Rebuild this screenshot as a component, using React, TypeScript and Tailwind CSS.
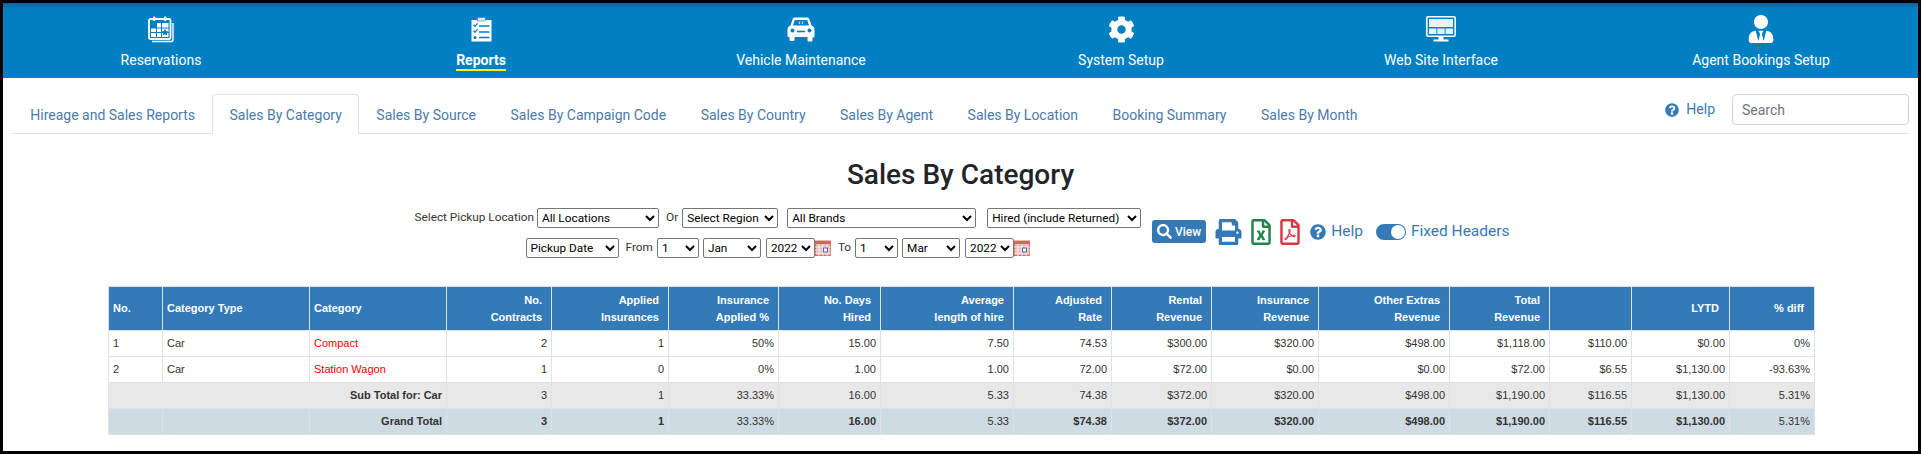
import { FaCog, FaPrint, FaQuestionCircle, FaRegFileExcel, FaRegFilePdf, FaSearch, FaUserTie } from 'react-icons/fa';

const NAV = ['Reservations', 'Reports', 'Vehicle Maintenance', 'System Setup', 'Web Site Interface', 'Agent Bookings Setup'];

const TABS = [
  'Hireage and Sales Reports',
  'Sales By Category',
  'Sales By Source',
  'Sales By Campaign Code',
  'Sales By Country',
  'Sales By Agent',
  'Sales By Location',
  'Booking Summary',
  'Sales By Month',
];

const COLS = [54, 147, 137, 105, 117, 110, 102, 133, 98, 100, 107, 131, 100, 82, 98, 85];

const HEAD: [string, string?][] = [
  ['No.'],
  ['Category Type'],
  ['Category'],
  ['No.', 'Contracts'],
  ['Applied', 'Insurances'],
  ['Insurance', 'Applied %'],
  ['No. Days', 'Hired'],
  ['Average', 'length of hire'],
  ['Adjusted', 'Rate'],
  ['Rental', 'Revenue'],
  ['Insurance', 'Revenue'],
  ['Other Extras', 'Revenue'],
  ['Total', 'Revenue'],
  [''],
  ['LYTD'],
  ['% diff'],
];

const ROWS = [
  ['1', 'Car', 'Compact', '2', '1', '50%', '15.00', '7.50', '74.53', '$300.00', '$320.00', '$498.00', '$1,118.00', '$110.00', '$0.00', '0%'],
  ['2', 'Car', 'Station Wagon', '1', '0', '0%', '1.00', '1.00', '72.00', '$72.00', '$0.00', '$0.00', '$72.00', '$6.55', '$1,130.00', '-93.63%'],
];

const SUB = ['3', '1', '33.33%', '16.00', '5.33', '74.38', '$372.00', '$320.00', '$498.00', '$1,190.00', '$116.55', '$1,130.00', '5.31%'];
const GRAND = ['3', '1', '33.33%', '16.00', '5.33', '$74.38', '$372.00', '$320.00', '$498.00', '$1,190.00', '$116.55', '$1,130.00', '5.31%'];
// grand total cells that are not bold in the picture
const GRAND_PLAIN = [2, 4, 12];

function CalendarIcon() {
  return (
    <svg viewBox="0 0 26 27" className="h-[27px] w-[26px]" fill="none">
      <path d="M4 25.500h19a2 2 0 0 0 2-2V7" stroke="#fff" strokeWidth="1.400" />
      <rect x="1" y="3" width="21.500" height="20" rx="1.500" fill="#0080c3" stroke="#fff" strokeWidth="1.800" />
      <rect x="5" y="0.500" width="2.400" height="4.500" rx="1" fill="#fff" />
      <rect x="16" y="0.500" width="2.400" height="4.500" rx="1" fill="#fff" />
      <path d="M8.500 7h12v5h-12zM3 12h17.500v9H3z" fill="#fff" />
      <path d="M3 16.500h18M8.500 7v14M13.500 7v14M3 12h18" stroke="#0080c3" strokeWidth="1" />
      <path d="m17 12.800 1.100 2.300 2.400.3-1.700 1.700.4 2.400-2.200-1.200-2.200 1.200.4-2.400-1.700-1.700 2.400-.3z" fill="#0080c3" />
    </svg>
  );
}

function ClipboardIcon() {
  return (
    <svg viewBox="0 0 21 25" className="h-[25px] w-[21px]">
      <path d="M0.500 3h20v21.500H.5z" fill="#fff" />
      <rect x="6.500" y="0.500" width="8" height="3.500" fill="#d6eaf5" stroke="#0080c3" strokeWidth="0.500" />
      <path d="m2.500 7.800 1.500 1.500 2.500-3M2.500 13.800l1.500 1.500 2.500-3" stroke="#0080c3" strokeWidth="1.300" fill="none" />
      <path d="M8 9h10.500M8 15h10.500M8 20.500h10.500" stroke="#0080c3" strokeWidth="1.500" />
      <circle cx="4" cy="20.500" r="1.500" fill="#0080c3" />
    </svg>
  );
}

function CarIcon() {
  return (
    <svg viewBox="0 0 28 25" className="h-[25px] w-[28px]">
      <path
        d="M5.500 2.500C6 1 7 .5 8.500.5h11c1.500 0 2.500.5 3 2l2 6c2 .8 3 2 3 4.500v6c0 1-.5 1.500-1.500 1.500H25.500v2.500c0 1-.5 1.500-1.500 1.500h-2c-1 0-1.500-.5-1.500-1.500V20h-13v2.500c0 1-.5 1.500-1.500 1.500H4c-1 0-1.500-.5-1.500-1.500V20H2c-1 0-1.500-.5-1.500-1.500v-5.500c0-2.500 1-3.700 3-4.500z"
        fill="#fff"
      />
      <path d="M7.800 3h12.400l1.800 5.500H6z" fill="#0080c3" />
      <path d="m13 4.500-1 2.500M16 4.500l-1 2.500" stroke="#fff" strokeWidth="0.900" />
      <circle cx="5.500" cy="13.500" r="2" fill="#0080c3" />
      <circle cx="22.500" cy="13.500" r="2" fill="#0080c3" />
      <path d="M10 14.500h8" stroke="#0080c3" strokeWidth="1.600" />
    </svg>
  );
}

function MonitorIcon() {
  return (
    <svg viewBox="0 0 30 26" className="h-[26px] w-[30px]">
      <rect x="0.800" y="0.800" width="28.400" height="19.400" rx="1.500" fill="none" stroke="#fff" strokeWidth="1.600" />
      <path d="M3 3h24v8H3z" fill="#e6f3fa" />
      <path d="M3 12.500h7.400V18H3zM11.300 12.500h7.400V18h-7.400zM19.600 12.500H27V18h-7.400z" fill="#e6f3fa" />
      <path d="M12.500 20.500h5v3h-5zM7.500 23.500h15V25.500h-15z" fill="#fff" />
    </svg>
  );
}

const NAV_ICONS = [
  <CalendarIcon key="cal" />,
  <ClipboardIcon key="clip" />,
  <CarIcon key="car" />,
  <FaCog key="cog" className="h-[27px] w-[27px] text-white" />,
  <MonitorIcon key="mon" />,
  <FaUserTie key="tie" className="h-[28px] w-[26px] text-white" />,
];

function DateCalendar() {
  return (
    <svg viewBox="0 0 16 16" className="h-[16px] w-[16px] shrink-0">
      <rect x="0.500" y="1" width="15" height="14.500" fill="#f3b3ad" stroke="#c9544c" strokeWidth="0.800" />
      <rect x="0.500" y="1" width="15" height="3" fill="#d8645c" />
      <path d="M0 7h16M0 10h16M0 13h16M4 4v12M8 4v12M12 4v12" stroke="#fff" strokeWidth="0.700" />
      <rect x="8.500" y="8" width="4" height="4" fill="#fff" stroke="#2f6fd0" strokeWidth="1" />
    </svg>
  );
}

function Select({ label, w }: { label: string; w: string }) {
  return (
    <select
      defaultValue={label}
      className={`h-[20px] ${w} rounded-[2px] border border-[#767676] bg-white text-[11.800px] leading-none text-black`}
    >
      <option>{label}</option>
    </select>
  );
}

export default function App() {
  return (
    <div className="h-[454px] w-[1921px] overflow-hidden border-[3px] border-black bg-white [font-family:Roboto,sans-serif]">
      <nav className="h-[75px] overflow-hidden bg-[#0080c3] bg-gradient-to-b from-[#00659a] from-0% to-[#0080c3] to-[8%]">
        <div className="-ml-0.5 grid w-[1920px] grid-cols-6">
          {NAV.map((label, i) => (
            <div key={label} className="flex flex-col items-center pt-[11px] text-white">
              <div className="flex h-[30px] items-center">{NAV_ICONS[i]}</div>
              <span
                className={`mt-[7px] text-[14px] leading-[18px] ${
                  i === 1 ? 'border-b-2 border-[#f5f500] font-bold' : ''
                }`}
              >
                {label}
              </span>
            </div>
          ))}
        </div>
      </nav>

      <div className="mx-[9px] mt-[16px] flex h-[40px] items-end border-b border-[#dee2e6] pl-[1px]">
        {TABS.map((t, i) => (
          <div
            key={t}
            className={`-mb-px h-[40px] rounded-t-[4px] border px-[16.250px] text-[14px] leading-[40px] text-[#4a7bab] ${
              i === 1 ? 'border-[#dee2e6] border-b-white bg-white' : 'border-transparent'
            }`}
          >
            {t}
          </div>
        ))}
        <div className="mb-[8px] ml-auto flex items-center gap-[7px]">
          <FaQuestionCircle className="h-[14px] w-[14px] text-[#337ab7]" />
          <span className="text-[14px] text-[#337ab7]">Help</span>
          <input
            placeholder="Search"
            className="ml-[10px] h-[31px] w-[177px] rounded-[4px] border border-[#ced4da] px-[9px] text-[14px] text-[#495057] placeholder:text-[#6c757d]"
          />
        </div>
      </div>

      <h1 className="mt-[19px] text-center text-[28px] leading-[44px] font-medium text-[#212529]">Sales By Category</h1>

      <div className="mt-[11px] flex items-center justify-center gap-[11px] pl-[3px] text-[11.800px] text-[#333]">
        <div className="flex flex-col items-center gap-[10px]">
          <div className="flex items-center">
            <span>Select Pickup Location</span>
            <div className="ml-[3px]">
              <Select label="All Locations" w="w-[122px]" />
            </div>
            <span className="mr-[4px] ml-[7px]">Or</span>
            <Select label="Select Region" w="w-[96px]" />
            <div className="ml-[9px]">
              <Select label="All Brands" w="w-[189px]" />
            </div>
            <div className="ml-[11px]">
              <Select label="Hired (include Returned)" w="w-[154px]" />
            </div>
          </div>
          <div className="flex items-center">
            <Select label="Pickup Date" w="w-[93px]" />
            <span className="mr-[4px] ml-[7px]">From</span>
            <Select label="1" w="w-[42px]" />
            <div className="ml-[4px]">
              <Select label="Jan" w="w-[58px]" />
            </div>
            <div className="ml-[5px]">
              <Select label="2022" w="w-[49px]" />
            </div>
            <DateCalendar />
            <span className="mr-[4px] ml-[7px]">To</span>
            <Select label="1" w="w-[43px]" />
            <div className="ml-[4px]">
              <Select label="Mar" w="w-[58px]" />
            </div>
            <div className="ml-[5px]">
              <Select label="2022" w="w-[49px]" />
            </div>
            <DateCalendar />
          </div>
        </div>

        <div className="mb-[3px] flex items-center text-[#337ab7]">
          <button className="flex h-[23px] w-[54px] items-center justify-center gap-[3px] rounded-[3px] bg-[#337ab7] text-[12px] font-medium text-white">
            <FaSearch className="h-[15px] w-[15px]" />
            View
          </button>
          <FaPrint className="ml-[9px] h-[26px] w-[27px]" />
          <FaRegFileExcel className="ml-[9px] h-[26px] w-[20px] text-[#1e8449]" />
          <FaRegFilePdf className="ml-[9px] h-[26px] w-[20px] text-[#dc3545]" />
          <FaQuestionCircle className="ml-[10px] h-[16px] w-[16px]" />
          <span className="ml-[5px] text-[15.500px]">Help</span>
          <div className="ml-[13px] flex h-[16px] w-[30px] items-center justify-end rounded-full bg-[#337ab7] px-[1px]">
            <div className="h-[14px] w-[14px] rounded-full bg-white" />
          </div>
          <span className="ml-[5px] text-[15.500px]">Fixed Headers</span>
        </div>
      </div>

      <div className="mt-[28px] pl-[105px]">
        <table className="table-fixed border-collapse text-[11px] leading-[17px] text-[#333] [font-family:Liberation_Sans,sans-serif]">
          <colgroup>
            {COLS.map((w, i) => (
              <col key={i} style={{ width: w }} />
            ))}
          </colgroup>
          <thead>
            <tr className="h-[44px] bg-[#337ab7] text-white">
              {HEAD.map(([a, b], i) => (
                <th
                  key={i}
                  className={`border border-[#dee2e6] px-[4px] font-bold ${
                    i < 3 ? 'text-left' : i > 12 ? 'pr-[10px] text-right' : 'pr-[9px] text-right'
                  }`}
                >
                  {a}
                  {b ? <br /> : null}
                  {b}
                </th>
              ))}
            </tr>
          </thead>
          <tbody>
            {ROWS.map((row) => (
              <tr key={row[0]} className="h-[26px] bg-white">
                {row.map((c, i) => (
                  <td
                    key={i}
                    className={`border border-[#dee2e6] px-[4px] ${i < 3 ? 'text-left' : 'text-right'} ${
                      i === 2 ? 'text-[#ff0000]' : ''
                    }`}
                  >
                    {c}
                  </td>
                ))}
              </tr>
            ))}
            <tr className="h-[26px] bg-[#e8e8e8]">
              <td colSpan={3} className="border border-[#dee2e6] px-[4px] text-right font-bold">
                Sub Total for: Car
              </td>
              {SUB.map((c, i) => (
                <td key={i} className="border border-[#dee2e6] px-[4px] text-right">
                  {c}
                </td>
              ))}
            </tr>
            <tr className="h-[26px] bg-[#cfdbe3] font-bold">
              <td className="border border-[#dee2e6]" />
              <td className="border border-[#dee2e6]" />
              <td className="border border-[#dee2e6] px-[4px] text-right">Grand Total</td>
              {GRAND.map((c, i) => (
                <td
                  key={i}
                  className={`border border-[#dee2e6] px-[4px] text-right ${GRAND_PLAIN.includes(i) ? 'font-normal' : ''}`}
                >
                  {c}
                </td>
              ))}
            </tr>
          </tbody>
        </table>
      </div>
    </div>
  );
}
